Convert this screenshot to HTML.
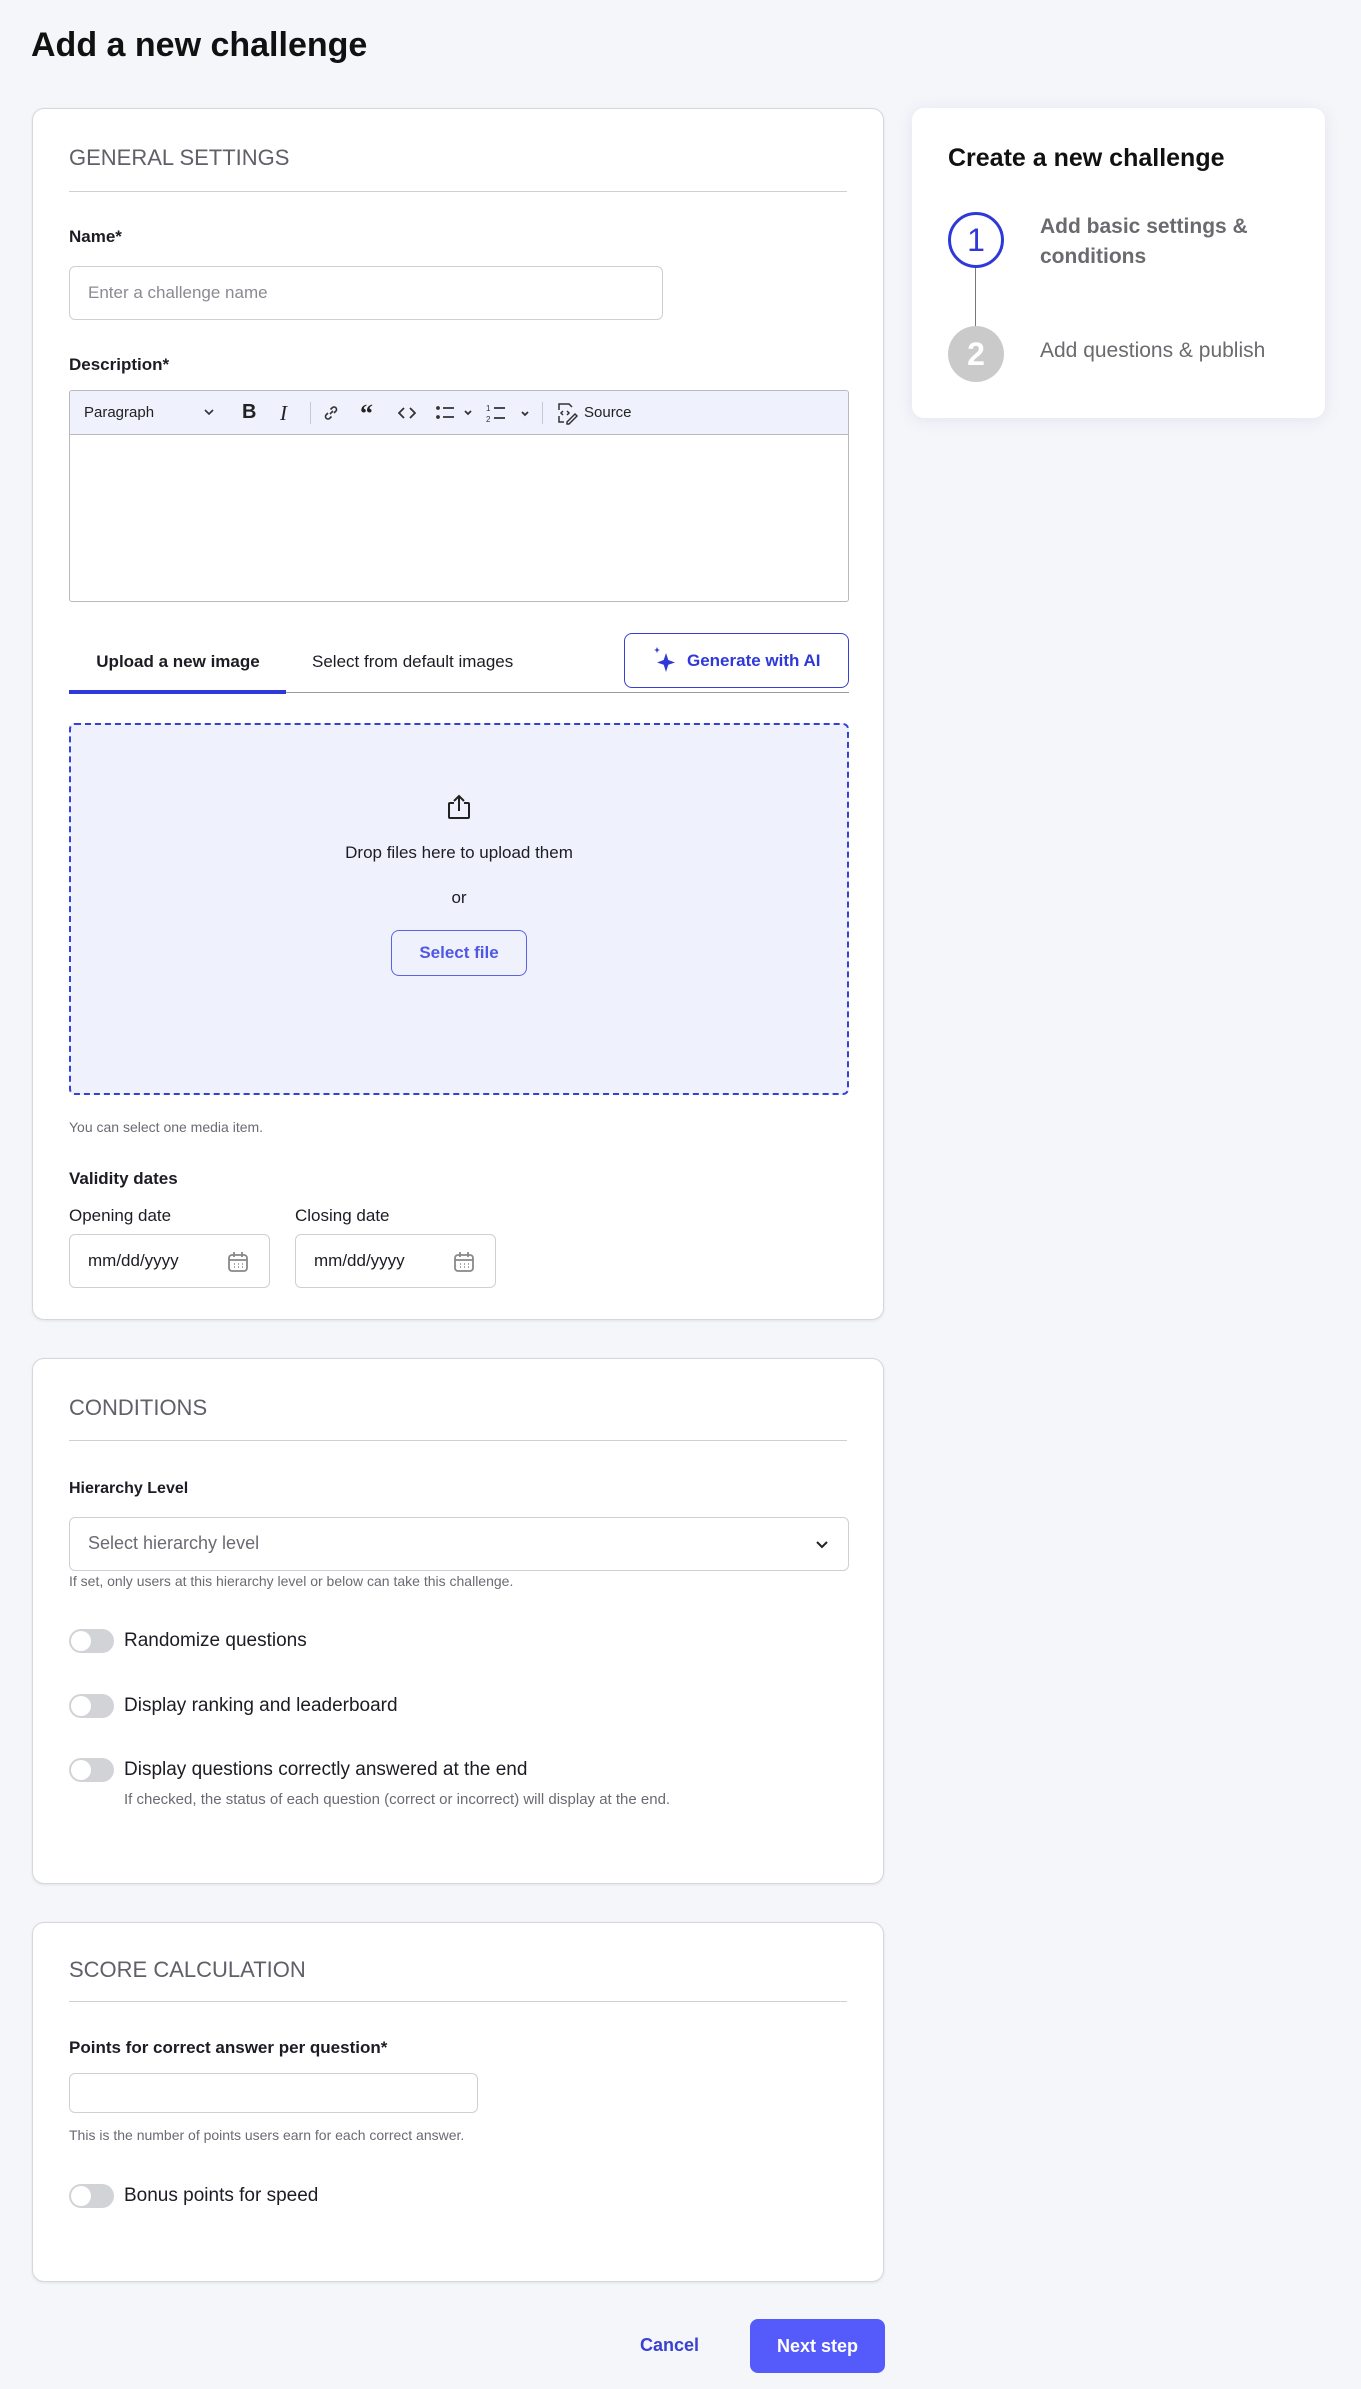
<!DOCTYPE html>
<html><head><meta charset="utf-8"><style>
*{box-sizing:border-box;margin:0;padding:0}
body{width:1361px;height:2389px;background:#f5f6fa;font-family:"Liberation Sans",sans-serif;color:#1c1c24;position:relative;overflow:hidden}
.a{position:absolute}
.card{position:absolute;background:#fff;border:1px solid #d6d7dc;border-radius:12px;box-shadow:0 1px 3px rgba(0,0,0,.08)}
.sec{position:absolute;left:36px;font-size:22px;color:#5f6068;line-height:26px}
.hr{position:absolute;left:36px;right:36px;height:1px;background:#cfd0d5}
.lbl{position:absolute;left:36px;font-size:17px;font-weight:bold;color:#1c1c24;line-height:22px}
.inp{position:absolute;border:1px solid #cfd0d5;border-radius:6px;background:#fff}
.help{position:absolute;font-size:14px;color:#6a6b73;line-height:18px}
.tg{position:absolute;left:36px;width:45px;height:24px;border-radius:12px;background:#d2d3d6}
.tg:after{content:"";position:absolute;left:2px;top:2px;width:20px;height:20px;border-radius:50%;background:#fff}
.tl{position:absolute;left:91px;font-size:19px;line-height:24px;color:#1c1c24}
</style></head><body>
<div class="a" style="left:31px;top:26px;font-size:34px;font-weight:bold;color:#111">Add a new challenge</div>

<div class="card" style="left:32px;top:108px;width:852px;height:1212px">
  <div class="sec" style="top:36px">GENERAL SETTINGS</div>
  <div class="hr" style="top:82px"></div>
  <div class="lbl" style="top:117px">Name*</div>
  <div class="inp" style="left:36px;top:157px;width:594px;height:54px"><span class="a" style="left:18px;top:16px;font-size:17px;color:#8a8b92">Enter a challenge name</span></div>
  <div class="lbl" style="top:245px">Description*</div>
  <div class="inp" style="left:36px;top:281px;width:780px;height:212px;border-color:#b9bac0;border-radius:3px;overflow:hidden">
    <div class="a" style="left:0;top:0;right:0;height:44px;background:#eff1fc;border-bottom:1px solid #b9bac0;font-size:15px;color:#222">
      <span class="a" style="left:14px;top:13px">Paragraph</span>
      <svg class="a" style="left:134px;top:18px" width="10" height="8"><path d="M1 1l4 4 4-4" stroke="#333" stroke-width="1.6" fill="none"/></svg>
      <span class="a" style="left:172px;top:10px;font-weight:bold;font-size:20px">B</span>
      <span class="a" style="left:210px;top:10px;font-style:italic;font-family:'Liberation Serif';font-size:21px">I</span>
      <span class="a" style="left:240px;top:11px;width:1px;height:22px;background:#c8c9d0"></span>
      <svg class="a" style="left:252px;top:13px" width="18" height="18" fill="none" stroke="#333" stroke-width="1.6"><path d="M8 10l3-3M6 9l-2 2a2.5 2.5 0 003.5 3.5l2-2M12 9l2-2a2.5 2.5 0 00-3.5-3.5l-2 2"/></svg>
      <span class="a" style="left:290px;top:8px;font-weight:bold;font-size:26px;font-family:'Liberation Serif'">“</span>
      <svg class="a" style="left:328px;top:15px" width="18" height="14" fill="none" stroke="#333" stroke-width="1.8"><path d="M6 2L1 7l5 5M12 2l5 5-5 5"/></svg>
      <svg class="a" style="left:366px;top:14px" width="44" height="16" fill="none" stroke="#333" stroke-width="1.8"><circle cx="2" cy="3" r="1" fill="#333"/><circle cx="2" cy="12" r="1" fill="#333"/><path d="M7 3h11M7 12h11M29 6l3 3 3-3"/></svg>
      <svg class="a" style="left:416px;top:12px" width="48" height="20" fill="none" stroke="#333" stroke-width="1.8"><path d="M8 5h11M8 15h11M36 9l3 3 3-3"/><text x="0" y="8" font-size="8" fill="#333" stroke="none">1</text><text x="0" y="19" font-size="8" fill="#333" stroke="none">2</text></svg>
      <span class="a" style="left:472px;top:11px;width:1px;height:22px;background:#c8c9d0"></span>
      <svg class="a" style="left:485px;top:10px" width="24" height="24" fill="none" stroke="#333" stroke-width="1.5"><path d="M4 9V3h10l3 3M4 15v6h5M8 10l-2 2 2 2M12 10l2 2-2 2M12 21l8-8 2 2-8 8h-2z"/></svg>
      <span class="a" style="left:514px;top:13px">Source</span>
    </div>
  </div>
  <div class="a" style="left:36px;top:543px;width:218px;text-align:center;font-size:17px;font-weight:bold">Upload a new image</div>
  <div class="a" style="left:279px;top:543px;font-size:17px">Select from default images</div>
  <div class="a" style="left:36px;top:583px;width:780px;height:1px;background:#9a9ba2"></div>
  <div class="a" style="left:36px;top:581px;width:217px;height:4px;background:#2f38d9"></div>
  <div class="a" style="left:591px;top:524px;width:225px;height:55px;border:1.5px solid #3740d6;border-radius:8px;color:#2f38d9;font-size:17px;font-weight:bold">
    <svg class="a" style="left:27px;top:12px" width="26" height="28" fill="#2f38d9"><path d="M14 7l2.3 7L23 16.5l-6.7 2.3L14 26l-2.3-7.2L5 16.5l6.7-2.5z"/><path d="M5 1l.9 2.2L8 4l-2.1.8L5 7l-.9-2.2L2 4l2.1-.8z"/></svg>
    <span class="a" style="left:62px;top:17px">Generate with AI</span>
  </div>
  <div class="a" style="left:36px;top:614px;width:780px;height:372px;border:2px dashed #3740d6;border-radius:6px;background:#eff2fc">
    <svg class="a" style="left:374px;top:68px" width="28" height="28" fill="none" stroke="#222" stroke-width="2"><path d="M9 10H5a1 1 0 00-1 1v13a1 1 0 001 1h18a1 1 0 001-1V11a1 1 0 00-1-1h-4M14 18V3M9 8l5-5 5 5"/></svg>
    <div class="a" style="left:0;right:0;top:118px;text-align:center;font-size:17px">Drop files here to upload them</div>
    <div class="a" style="left:0;right:0;top:163px;text-align:center;font-size:17px">or</div>
    <div class="a" style="left:320px;top:205px;width:136px;height:46px;border:1.5px solid #5a62e6;border-radius:8px;text-align:center;line-height:43px;color:#4f58e4;font-size:17px;font-weight:bold">Select file</div>
  </div>
  <div class="help" style="left:36px;top:1009px">You can select one media item.</div>
  <div class="lbl" style="top:1059px">Validity dates</div>
  <div class="a" style="left:36px;top:1097px;font-size:17px">Opening date</div>
  <div class="a" style="left:262px;top:1097px;font-size:17px">Closing date</div>
  <div class="inp" style="left:36px;top:1125px;width:201px;height:54px"><span class="a" style="left:18px;top:16px;font-size:17px">mm/dd/yyyy</span>
    <svg class="a" style="left:156px;top:15px" width="24" height="24" fill="none" stroke="#888" stroke-width="1.8"><rect x="3" y="5" width="18" height="16" rx="3"/><path d="M3 10h18M8 2v5M16 2v5"/><path d="M8 14h1M12 14h1M16 14h1M8 17h1M12 17h1M16 17h1" stroke-width="1.4"/></svg></div>
  <div class="inp" style="left:262px;top:1125px;width:201px;height:54px"><span class="a" style="left:18px;top:16px;font-size:17px">mm/dd/yyyy</span>
    <svg class="a" style="left:156px;top:15px" width="24" height="24" fill="none" stroke="#888" stroke-width="1.8"><rect x="3" y="5" width="18" height="16" rx="3"/><path d="M3 10h18M8 2v5M16 2v5"/><path d="M8 14h1M12 14h1M16 14h1M8 17h1M12 17h1M16 17h1" stroke-width="1.4"/></svg></div>
</div>

<div class="card" style="left:32px;top:1358px;width:852px;height:526px">
  <div class="sec" style="top:36px">CONDITIONS</div>
  <div class="hr" style="top:81px"></div>
  <div class="lbl" style="top:119px;font-size:16px">Hierarchy Level</div>
  <div class="inp" style="left:36px;top:158px;width:780px;height:54px"><span class="a" style="left:18px;top:15px;font-size:18px;color:#6a6b73">Select hierarchy level</span>
    <svg class="a" style="left:745px;top:22px" width="14" height="10"><path d="M2 2l5 5 5-5" stroke="#222" stroke-width="2" fill="none"/></svg></div>
  <div class="help" style="left:36px;top:213px">If set, only users at this hierarchy level or below can take this challenge.</div>
  <div class="tg" style="top:270px"></div><div class="tl" style="top:270px">Randomize questions</div>
  <div class="tg" style="top:335px"></div><div class="tl" style="top:335px">Display ranking and leaderboard</div>
  <div class="tg" style="top:399px"></div><div class="tl" style="top:399px">Display questions correctly answered at the end</div>
  <div class="help" style="left:91px;top:432px;font-size:15px">If checked, the status of each question (correct or incorrect) will display at the end.</div>
</div>

<div class="card" style="left:32px;top:1922px;width:852px;height:360px">
  <div class="sec" style="top:34px">SCORE CALCULATION</div>
  <div class="hr" style="top:78px"></div>
  <div class="lbl" style="top:114px">Points for correct answer per question*</div>
  <div class="inp" style="left:36px;top:150px;width:409px;height:40px"></div>
  <div class="help" style="left:36px;top:203px">This is the number of points users earn for each correct answer.</div>
  <div class="tg" style="top:261px"></div><div class="tl" style="top:261px">Bonus points for speed</div>
</div>

<div class="a" style="left:640px;top:2335px;font-size:18px;font-weight:bold;color:#3a40d0">Cancel</div>
<div class="a" style="left:750px;top:2319px;width:135px;height:54px;background:#545bfa;border-radius:8px;color:#fff;font-size:18px;font-weight:bold;text-align:center;line-height:54px">Next step</div>

<div class="a" style="left:912px;top:108px;width:413px;height:310px;background:#fff;border-radius:12px;box-shadow:0 2px 16px rgba(100,100,160,.12)">
  <div class="a" style="left:36px;top:36px;font-size:25px;font-weight:bold;color:#111">Create a new challenge</div>
  <div class="a" style="left:36px;top:104px;width:56px;height:56px;border:3px solid #2f38d9;border-radius:50%;text-align:center;line-height:50px;font-size:32px;color:#2f38d9">1</div>
  <div class="a" style="left:63px;top:160px;width:1px;height:58px;background:#777"></div>
  <div class="a" style="left:36px;top:218px;width:56px;height:56px;background:#cacaca;border-radius:50%;text-align:center;line-height:56px;font-size:32px;color:#fff;font-weight:bold">2</div>
  <div class="a" style="left:128px;top:104px;font-size:21px;font-weight:bold;color:#6a6a6f;line-height:30px;width:240px">Add basic settings &amp; conditions</div>
  <div class="a" style="left:128px;top:231px;font-size:21px;color:#6a6a6f">Add questions &amp; publish</div>
</div>
</body></html>
